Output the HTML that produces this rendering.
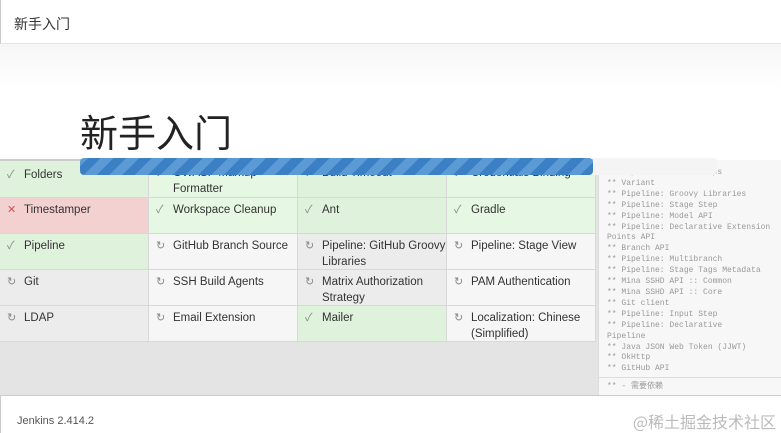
<!DOCTYPE html>
<html><head><meta charset="utf-8"><style>
*{margin:0;padding:0;box-sizing:border-box}
body{width:781px;height:433px;overflow:hidden;background:#fff;font-family:"Liberation Sans","Noto Sans CJK SC",sans-serif;position:relative;color:#333}
.hdr{position:absolute;left:0;top:0;width:781px;height:44px;border-bottom:1px solid #e5e5e5;border-left:1px solid #ccc;background:#fff}
.hdr span{position:absolute;left:13px;top:14px;font-size:14px;color:#333}
.body{position:absolute;left:0;top:44px;width:781px;height:116px;background:linear-gradient(#f6f6f6,#fff 40%)}
h1{position:absolute;left:80px;top:106px;font-size:38px;font-weight:normal;color:#222;font-family:"Noto Sans CJK SC",sans-serif;line-height:50px}
.grid{position:absolute;left:0;top:159px;width:598px;height:236px;background:#e4e4e4;border-top:2px solid #ccc}
.c{position:absolute;width:149px;height:36px;border-right:1px solid #d8d8d8;border-bottom:1px solid #d8d8d8;font-size:11.5px;line-height:16px;padding:4px 0 0 24px;color:#333}
.c i{position:absolute;left:7px;top:4px;font-style:normal;font-size:11px;color:#888}
.g{background:#dff2dc}.g2{background:#e6f7e3}.r{background:#f3d1d1}.w{background:#f6f6f6}.e{background:#ececec}
.r i{color:#c55}
.bar{position:absolute;left:80px;top:158px;width:513px;height:17px;border-radius:4px;background:repeating-linear-gradient(-45deg,#3b7fc4 0 9px,#5c9ad6 9px 18px)}
.bar::after{content:"";position:absolute;right:-124px;top:0;width:124px;height:17px;background:#f4f4f4;border-radius:0 4px 4px 0}
.log{position:absolute;left:598px;top:160px;width:183px;height:235px;background:#f7f7f7;border-left:1px solid #ddd;font-family:"Liberation Mono","Noto Sans CJK SC",monospace;font-size:8px;line-height:10.9px;color:#999;padding:8px 0 0 8px;overflow:hidden;white-space:pre}
.log .d{position:absolute;left:0;top:217px;width:183px;border-top:1px solid #ddd;padding:4px 8px;}
.foot{position:absolute;left:0;top:395px;width:781px;height:38px;border-top:1px solid #ccc;border-left:1px solid #ccc;background:#fff}
.foot span{position:absolute;left:16px;top:19px;font-size:11px;color:#555}
.wm{position:absolute;right:5px;top:409px;font-size:16px;color:#bbb;font-family:"Noto Sans CJK SC",sans-serif}
</style></head><body>
<div class="hdr"><span>新手入门</span></div>
<div class="body"></div>
<h1>新手入门</h1>
<div class="grid">
<div class="c g" style="left:0;top:0;height:37px;padding-top:6px"><i style="top:6px">✓</i>Folders</div>
<div class="c g2" style="left:149px;top:0;height:37px"><i>✓</i>OWASP Markup<br>Formatter</div>
<div class="c g" style="left:298px;top:0;height:37px"><i>✓</i>Build Timeout</div>
<div class="c g2" style="left:447px;top:0;height:37px"><i>✓</i>Credentials Binding</div>
<div class="c r" style="left:0;top:37px"><i>✕</i>Timestamper</div>
<div class="c g2" style="left:149px;top:37px"><i>✓</i>Workspace Cleanup</div>
<div class="c g" style="left:298px;top:37px"><i>✓</i>Ant</div>
<div class="c g2" style="left:447px;top:37px"><i>✓</i>Gradle</div>
<div class="c g" style="left:0;top:73px"><i>✓</i>Pipeline</div>
<div class="c w" style="left:149px;top:73px"><i>↻</i>GitHub Branch Source</div>
<div class="c e" style="left:298px;top:73px"><i>↻</i>Pipeline: GitHub Groovy Libraries</div>
<div class="c w" style="left:447px;top:73px"><i>↻</i>Pipeline: Stage View</div>
<div class="c e" style="left:0;top:109px"><i>↻</i>Git</div>
<div class="c w" style="left:149px;top:109px"><i>↻</i>SSH Build Agents</div>
<div class="c e" style="left:298px;top:109px"><i>↻</i>Matrix Authorization Strategy</div>
<div class="c w" style="left:447px;top:109px"><i>↻</i>PAM Authentication</div>
<div class="c e" style="left:0;top:145px"><i>↻</i>LDAP</div>
<div class="c w" style="left:149px;top:145px"><i>↻</i>Email Extension</div>
<div class="c g" style="left:298px;top:145px"><i>✓</i>Mailer</div>
<div class="c w" style="left:447px;top:145px"><i>↻</i>Localization: Chinese (Simplified)</div>
</div>
<div class="log">** Pipeline: Basic Steps
** Variant
** Pipeline: Groovy Libraries
** Pipeline: Stage Step
** Pipeline: Model API
** Pipeline: Declarative Extension
Points API
** Branch API
** Pipeline: Multibranch
** Pipeline: Stage Tags Metadata
** Mina SSHD API :: Common
** Mina SSHD API :: Core
** Git client
** Pipeline: Input Step
** Pipeline: Declarative
Pipeline
** Java JSON Web Token (JJWT)
** OkHttp
** GitHub API<div class="d">** - 需要依赖</div></div>
<div class="bar"></div>
<div class="foot"><span>Jenkins 2.414.2</span></div>
<div class="wm">@稀土掘金技术社区</div>
</body></html>
